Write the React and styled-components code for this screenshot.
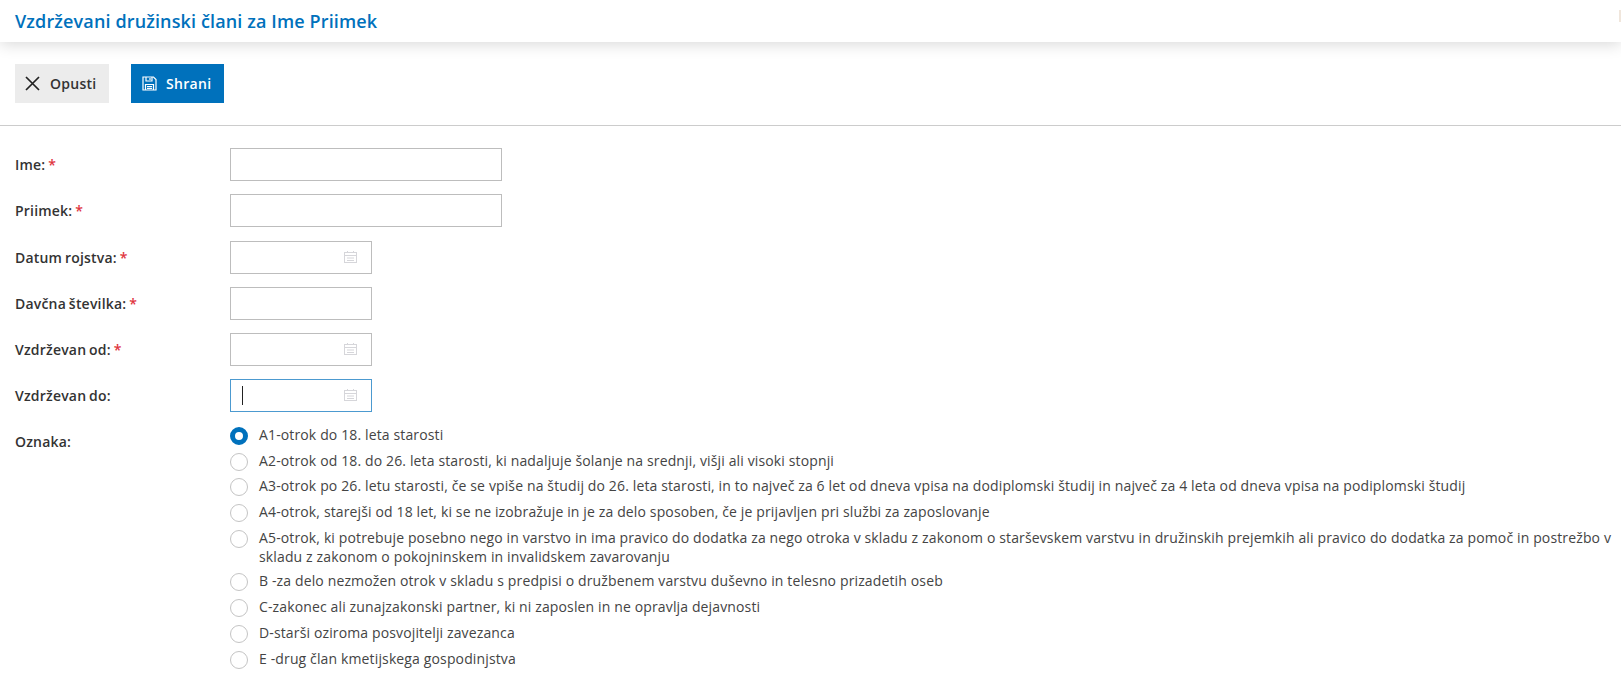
import React from 'react'
import styled, { createGlobalStyle } from 'styled-components'

const GlobalStyle = createGlobalStyle`
  html, body {
    margin: 0;
    padding: 0;
    background: #fff;
    font-family: "Open Sans", "Liberation Sans", sans-serif;
    color: #333;
  }
`

const Page = styled.div`
  position: relative;
  width: 1621px;
  height: 677px;
  overflow: hidden;
`

const Header = styled.header`
  height: 42px;
  padding-left: 15px;
  display: flex;
  align-items: center;
  background: #fff;
  box-shadow: 0 2px 16px rgba(0, 0, 0, 0.16);
  position: relative;
`

const Title = styled.h1`
  margin: 0;
  font-size: 18px;
  font-weight: 600;
  letter-spacing: 0.13px;
  color: #0071bc;
`

const EdgeMark = styled.span`
  position: absolute;
  top: 10px;
  right: 0;
  width: 2px;
  height: 12px;
  background: #f0e6dc;
`

const Toolbar = styled.div`
  display: flex;
  gap: 22px;
  padding: 22px 15px;
  border-bottom: 1px solid #ccc;
`

const Button = styled.button`
  height: 39px;
  width: ${(props) => (props.$primary ? '93px' : '94px')};
  padding: 0 0 0 ${(props) => (props.$primary ? '11px' : '10px')};
  border: none;
  display: flex;
  align-items: center;
  gap: ${(props) => (props.$primary ? '9px' : '10px')};
  font-family: inherit;
  font-size: 14px;
  font-weight: ${(props) => (props.$primary ? 600 : 550)};
  letter-spacing: ${(props) => (props.$primary ? '0.3px' : '0.25px')};
  background: ${(props) => (props.$primary ? '#0071bc' : '#ececec')};
  color: ${(props) => (props.$primary ? '#fff' : '#333')};
`

const Form = styled.form`
  padding: 22px 0 0 15px;
  display: flex;
  flex-direction: column;
  gap: 13.25px;
`

const Row = styled.div`
  display: flex;
  align-items: ${(props) => (props.$top ? 'flex-start' : 'center')};
`

const Label = styled.label`
  width: 215px;
  flex-shrink: 0;
  font-size: 14px;
  font-weight: 550;
  letter-spacing: 0.2px;
  word-spacing: -1px;
  color: #333;
  padding-top: ${(props) => (props.$top ? '6px' : '0')};
`

const Star = styled.span`
  color: #e0343e;
`

const Field = styled.div`
  box-sizing: border-box;
  position: relative;
  width: ${(props) => (props.$wide ? '272px' : '142px')};
  height: 33px;
  border: 1px solid ${(props) => (props.$focused ? '#4c9ad0' : '#bdbdbd')};
  background: #fff;
`

const Caret = styled.span`
  position: absolute;
  left: 11px;
  top: 6px;
  width: 1px;
  height: 19px;
  background: #222;
`

const CalendarSlot = styled.span`
  position: absolute;
  right: 14px;
  top: 9px;
  display: flex;
`

const RadioList = styled.div`
  display: flex;
  flex-direction: column;
  gap: 5.7px;
  margin-top: -0.5px;
`

const RadioRow = styled.div`
  display: flex;
  align-items: flex-start;
  gap: 11px;
  width: 1391px;
`

const RadioDot = styled.span`
  box-sizing: border-box;
  flex-shrink: 0;
  width: 18px;
  height: 18px;
  margin-top: 2px;
  border-radius: 50%;
  background: #fff;
  border: ${(props) => (props.$checked ? '5px solid #0071bc' : '1px solid #c4c4c4')};
`

const RadioText = styled.span`
  font-size: 14px;
  line-height: 19px;
  letter-spacing: 0.135px;
  color: #444;
`

const Calendar = () => (
  <svg width="13" height="12" viewBox="0 0 13 12" fill="none" stroke="#d6d6da" strokeWidth="1">
    <rect x="0.5" y="1.5" width="12" height="10" />
    <path d="M0.5 4.5h12M3.5 0v1.5M9.5 0v1.5M3 7h7M3 9.5h7" />
  </svg>
)

const CloseIcon = () => (
  <svg width="15" height="15" viewBox="0 0 15 15" fill="none" stroke="#222" strokeWidth="1.7">
    <path d="M1 1l13 13M14 1L1 14" />
  </svg>
)

const SaveIcon = () => (
  <svg width="15" height="15" viewBox="0 0 15 15" fill="none" stroke="#fff" strokeWidth="1.2">
    <path d="M1 1h10.5L14 3.5V14H1z" />
    <path d="M4 1v4h6V1M8 2v2M3.5 14V8.5h8V14M5 10.5h5M5 12.3h5" />
  </svg>
)

const options = [
  'A1-otrok do 18. leta starosti',
  'A2-otrok od 18. do 26. leta starosti, ki nadaljuje šolanje na srednji, višji ali visoki stopnji',
  'A3-otrok po 26. letu starosti, če se vpiše na študij do 26. leta starosti, in to največ za 6 let od dneva vpisa na dodiplomski študij in največ za 4 leta od dneva vpisa na podiplomski študij',
  'A4-otrok, starejši od 18 let, ki se ne izobražuje in je za delo sposoben, če je prijavljen pri službi za zaposlovanje',
  'A5-otrok, ki potrebuje posebno nego in varstvo in ima pravico do dodatka za nego otroka v skladu z zakonom o starševskem varstvu in družinskih prejemkih ali pravico do dodatka za pomoč in postrežbo v skladu z zakonom o pokojninskem in invalidskem zavarovanju',
  'B -za delo nezmožen otrok v skladu s predpisi o družbenem varstvu duševno in telesno prizadetih oseb',
  'C-zakonec ali zunajzakonski partner, ki ni zaposlen in ne opravlja dejavnosti',
  'D-starši oziroma posvojitelji zavezanca',
  'E -drug član kmetijskega gospodinjstva',
]

const fields = [
  { label: 'Ime:', required: true, wide: true },
  { label: 'Priimek:', required: true, wide: true },
  { label: 'Datum rojstva:', required: true, date: true },
  { label: 'Davčna številka:', required: true },
  { label: 'Vzdrževan od:', required: true, date: true },
  { label: 'Vzdrževan do:', date: true, focused: true },
]

const App = () => {
  return (
    <Page>
      <GlobalStyle />
      <Header>
        <Title>Vzdrževani družinski člani za Ime Priimek</Title>
        <EdgeMark />
      </Header>
      <Toolbar>
        <Button type="button">
          <CloseIcon />
          Opusti
        </Button>
        <Button type="button" $primary>
          <SaveIcon />
          Shrani
        </Button>
      </Toolbar>
      <Form>
        {fields.map((field) => (
          <Row key={field.label}>
            <Label>
              {field.label} {field.required && <Star>*</Star>}
            </Label>
            <Field $wide={field.wide} $focused={field.focused}>
              {field.focused && <Caret />}
              {field.date && (
                <CalendarSlot>
                  <Calendar />
                </CalendarSlot>
              )}
            </Field>
          </Row>
        ))}
        <Row $top>
          <Label $top>Oznaka:</Label>
          <RadioList>
            {options.map((option, index) => (
              <RadioRow key={option}>
                <RadioDot $checked={index === 0} />
                <RadioText>{option}</RadioText>
              </RadioRow>
            ))}
          </RadioList>
        </Row>
      </Form>
    </Page>
  )
}

export default App
